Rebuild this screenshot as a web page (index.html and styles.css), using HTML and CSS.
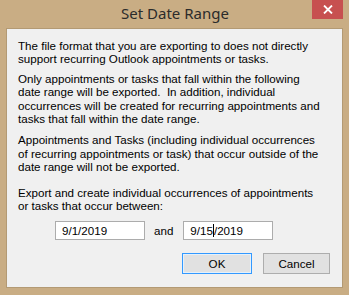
FILE: index.html
```html
<!DOCTYPE html>
<html>
<head>
<meta charset="utf-8">
<link rel="stylesheet" href="styles.css">
</head>
<body>
<div class="window">
  <div class="titlebar">
    <span></span>
    <div class="title">Set Date Range</div>
    <div class="close-wrap">
      <div class="close">
        <svg width="10" height="9" viewBox="0 0 10 9"><path d="M1 0.5 L9 8.5 M9 0.5 L1 8.5" stroke="#fff" stroke-width="1.8"/></svg>
      </div>
    </div>
  </div>
  <div class="client">
    <p class="p1">The file format that you are exporting to does not directly<br>support recurring Outlook appointments or tasks.</p>
    <p class="p2">Only appointments or tasks that fall within the following<br>date range will be exported.&nbsp; In addition, individual<br>occurrences will be created for recurring appointments and<br>tasks that fall within the date range.</p>
    <p class="p3">Appointments and Tasks (including individual occurrences<br>of recurring appointments or task) that occur outside of the<br>date range will not be exported.</p>
    <p class="p4">Export and create individual occurrences of appointments<br>or tasks that occur between:</p>
    <div class="dates">
      <div class="field">9/1/2019</div>
      <span class="and">and</span>
      <div class="field">9/15<span class="caret"></span>/2019</div>
    </div>
    <div class="buttons">
      <div class="btn btn-ok">OK</div>
      <div class="btn btn-cancel">Cancel</div>
    </div>
  </div>
</div>
</body>
</html>
```
FILE: styles.css
```css
html, body {
  margin: 0;
  padding: 0;
}
body {
  width: 349px;
  height: 295px;
  overflow: hidden;
  font-family: "Noto Sans", "Open Sans", sans-serif;
}
.window {
  width: 349px;
  height: 295px;
  background: #c9ad84;
  display: flex;
  flex-direction: column;
  box-sizing: border-box;
}
.titlebar {
  height: 28px;
  display: grid;
  grid-template-columns: 1fr auto 1fr;
  align-items: start;
}
.title {
  font-size: 15px;
  color: #2b2b2b;
  line-height: 20px;
  padding-top: 3px;
  padding-left: 1px;
}
.close-wrap {
  display: flex;
  justify-content: flex-end;
  padding-right: 6px;
}
.close {
  width: 31px;
  height: 19px;
  background: #c75050;
  display: flex;
  align-items: center;
  justify-content: center;
}
.client {
  margin: 0 6px 7px 6px;
  flex: 1;
  background: #f0f0f0;
  border: 1px solid #b39a74;
  padding: 10px 0 0 11px;
  font-family: "Liberation Sans", Arial, sans-serif;
  font-size: 11.6px;
  line-height: 13.4px;
  color: #000;
}
.client p {
  margin: 0;
  white-space: nowrap;
}
.p2 { margin-top: 6px !important; }
.p3 { margin-top: 8px !important; }
.p4 { margin-top: 12px !important; }
.dates {
  display: flex;
  align-items: center;
  margin-top: 9px;
  padding-left: 37px;
}
.field {
  width: 90px;
  height: 19px;
  box-sizing: border-box;
  border: 1px solid #acacac;
  background: #fff;
  padding-left: 6px;
  line-height: 17px;
}
.and {
  margin: 0 10px 0 9px;
}
.caret {
  display: inline-block;
  width: 1px;
  height: 13px;
  background: #000;
  vertical-align: -2px;
}
.buttons {
  display: flex;
  gap: 11px;
  margin-top: 13px;
  padding-left: 164px;
}
.btn {
  height: 21px;
  box-sizing: border-box;
  background: #e1e1e1;
  border: 1px solid #adadad;
  display: flex;
  align-items: center;
  justify-content: center;
}
.btn-ok {
  width: 70px;
  border-color: #3399ff;
  box-shadow: inset 0 0 0 1px #e5f1fb;
}
.btn-cancel {
  width: 67px;
}
```
